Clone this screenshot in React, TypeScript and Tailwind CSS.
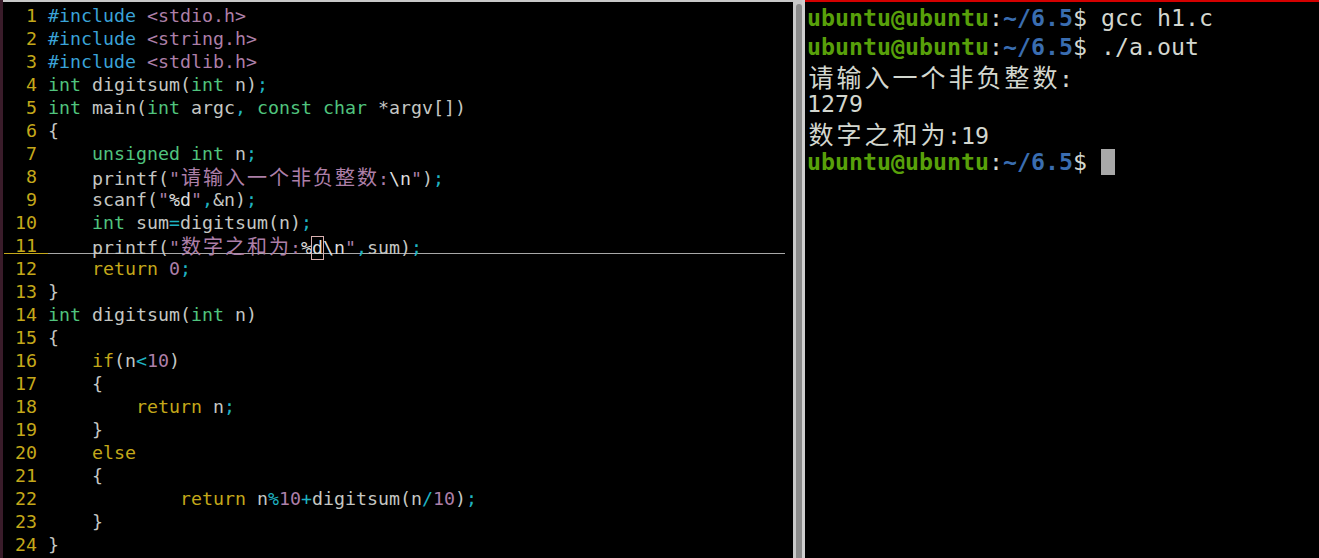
import React from 'react';

type Tok = { t: string; c: string; cjk?: boolean; cursor?: boolean };

const P = 'text-[#c5c7c3]';
const Y = 'text-[#c4a81a]';
const B = 'text-[#3aa3d8]';
const G = 'text-[#50c47e]';
const M = 'text-[#ad7fa8]';
const C = 'text-[#1fb3c2]';
const W = 'text-[#dcdcdc]';

const tk = (t: string, c: string): Tok => ({ t, c });

const code: Tok[][] = [
  [tk('#include', B), tk(' ', P), tk('<stdio.h>', M)],
  [tk('#include', B), tk(' ', P), tk('<string.h>', M)],
  [tk('#include', B), tk(' ', P), tk('<stdlib.h>', M)],
  [tk('int', G), tk(' digitsum(', P), tk('int', G), tk(' n)', P), tk(';', C)],
  [
    tk('int', G), tk(' main(', P), tk('int', G), tk(' argc', P), tk(',', C), tk(' ', P),
    tk('const', G), tk(' ', P), tk('char', G), tk(' *argv[])', P),
  ],
  [tk('{', P)],
  [tk('    ', P), tk('unsigned', G), tk(' ', P), tk('int', G), tk(' n', P), tk(';', C)],
  [
    tk('    printf(', P), tk('"', M), { t: '请输入一个非负整数', c: M, cjk: true }, tk(':', M),
    tk('\\n', W), tk('"', M), tk(')', P), tk(';', C),
  ],
  [tk('    scanf(', P), tk('"', M), tk('%d', W), tk('"', M), tk(',', C), tk('&n)', P), tk(';', C)],
  [tk('    ', P), tk('int', G), tk(' sum', P), tk('=', C), tk('digitsum(n)', P), tk(';', C)],
  [
    tk('    printf(', P), tk('"', M), { t: '数字之和为', c: M, cjk: true }, tk(':', M), tk('%', W),
    { t: 'd', c: W, cursor: true }, tk('\\n', W), tk('"', M), tk(',', C), tk('sum)', P), tk(';', C),
  ],
  [tk('    ', P), tk('return', Y), tk(' ', P), tk('0', M), tk(';', C)],
  [tk('}', P)],
  [tk('int', G), tk(' digitsum(', P), tk('int', G), tk(' n)', P)],
  [tk('{', P)],
  [tk('    ', P), tk('if', Y), tk('(n', P), tk('<', C), tk('10', M), tk(')', P)],
  [tk('    {', P)],
  [tk('        ', P), tk('return', Y), tk(' n', P), tk(';', C)],
  [tk('    }', P)],
  [tk('    ', P), tk('else', Y)],
  [tk('    {', P)],
  [
    tk('            ', P), tk('return', Y), tk(' n', P), tk('%', C), tk('10', M), tk('+', C),
    tk('digitsum(n', P), tk('/', C), tk('10', M), tk(')', P), tk(';', C),
  ],
  [tk('    }', P)],
  [tk('}', P)],
];

const Token = ({ tok }: { tok: Tok }) => {
  if (tok.cjk) {
    return (
      <>
        {tok.t.split('').map((ch, i) => (
          <span
            key={i}
            className={`inline-block w-[22px] text-center text-[20px] leading-[23px] font-['Noto_Sans_CJK_SC',sans-serif] ${tok.c}`}
          >
            {ch}
          </span>
        ))}
      </>
    );
  }
  if (tok.cursor) {
    return (
      <span className={`inline-block w-[11px] h-[22px] outline outline-1 outline-[#d8b0b0] leading-[22px] ${tok.c}`}>
        {tok.t}
      </span>
    );
  }
  return <span className={tok.c}>{tok.t}</span>;
};

const Editor = () => (
  <div className="w-[790px] h-full border-t-2 border-[#c8c8c8] pt-[2px] pl-[1px] font-['DejaVu_Sans_Mono',monospace] text-[18.27px] leading-[23px] whitespace-pre">
    {code.map((line, i) => {
      const num = String(i + 1).padStart(3, ' ') + ' ';
      if (i === 10) {
        return (
          <div key={i} className="flex h-[23px]">
            <span className="h-[20px] border-b border-[#c4a81a] text-[#c4a81a]">{num}</span>
            <span className="h-[20px] flex-1 mr-[8px] border-b border-[#a8a8a8]">
              {line.map((tok, j) => (
                <Token key={j} tok={tok} />
              ))}
            </span>
          </div>
        );
      }
      return (
        <div key={i} className="flex h-[23px]">
          <span className="text-[#c4a81a]">{num}</span>
          <span>
            {line.map((tok, j) => (
              <Token key={j} tok={tok} />
            ))}
          </span>
        </div>
      );
    })}
  </div>
);

const TCjk = ({ t }: { t: string }) => (
  <>
    {t.split('').map((ch, i) => (
      <span
        key={i}
        className="inline-block w-[28px] text-center text-[25px] leading-[28.8px] font-['Noto_Sans_CJK_SC',sans-serif]"
      >
        {ch}
      </span>
    ))}
  </>
);

const Prompt = () => (
  <>
    <span className="font-bold text-[#58a00a]">ubuntu@ubuntu</span>
    <span className="text-[#d3d7cf]">:</span>
    <span className="font-bold text-[#3a6db0]">~/6.5</span>
    <span className="text-[#d3d7cf]">$ </span>
  </>
);

const Terminal = () => (
  <div className="flex-1 h-full border-t-2 border-[#d40000] pt-[2px] pl-[2px] font-['DejaVu_Sans_Mono',monospace] text-[23.25px] leading-[28.8px] whitespace-pre text-[#d3d7cf]">
    <div className="h-[28.8px]">
      <Prompt />
      gcc h1.c
    </div>
    <div className="h-[28.8px]">
      <Prompt />
      ./a.out
    </div>
    <div className="h-[28.8px]">
      <TCjk t="请输入一个非负整数" />:
    </div>
    <div className="h-[28.8px]">1279</div>
    <div className="h-[28.8px]">
      <TCjk t="数字之和为" />:19
    </div>
    <div className="h-[28.8px] flex items-center">
      <span>
        <Prompt />
      </span>
      <span className="inline-block w-[14px] h-[26px] bg-[#a8a8a8]" />
    </div>
  </div>
);

const Divider = () => (
  <div className="flex h-full w-[12px]">
    <div className="w-[3px] h-full bg-[#c8c8c8]" />
    <div className="w-[6px] h-full bg-[#c8c8c8] flex flex-col">
      <div className="mt-[4px] flex-1 rounded-t-full bg-[#8a8a8a]" />
    </div>
    <div className="w-[3px] h-full bg-[#cfcfcf]" />
  </div>
);

export default function App() {
  return (
    <div className="w-[1319px] h-[558px] overflow-hidden bg-black flex">
      <div className="w-[3px] h-full bg-[#3a1c2a]" />
      <Editor />
      <Divider />
      <Terminal />
    </div>
  );
}
